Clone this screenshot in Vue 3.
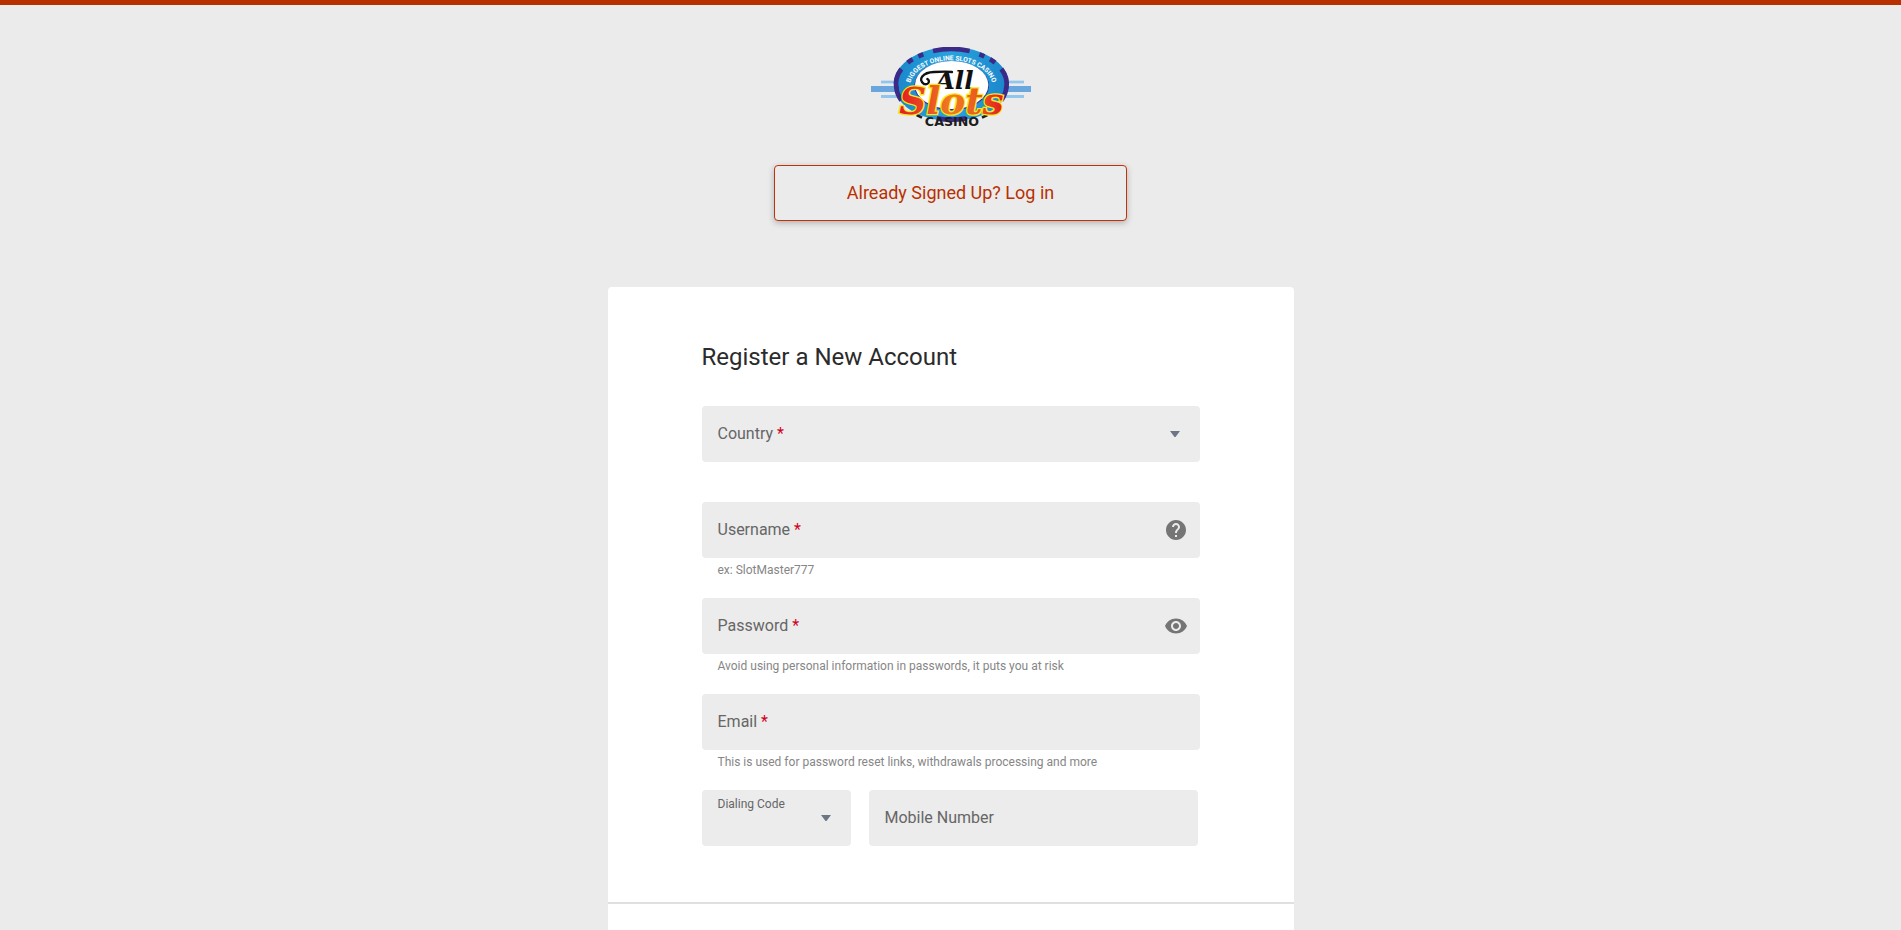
<script setup>
import { ref } from "vue"

const country = ref("")
const dialingCode = ref("")
const mobile = ref("")
const showPassword = ref(false)

const fields = ref([
  { id: "username", label: "Username", type: "text", value: "", hint: "ex: SlotMaster777" },
  { id: "password", label: "Password", type: "password", value: "", hint: "Avoid using personal information in passwords, it puts you at risk" },
  { id: "email", label: "Email", type: "email", value: "", hint: "This is used for password reset links, withdrawals processing and more" },
])

function inputType(field) {
  if (field.id === "password" && showPassword.value) return "text"
  return field.type
}
</script>

<template>
  <div class="page">
    <header class="header">
      <a href="#" class="logo" aria-label="All Slots Casino">
        <svg viewBox="33 36 480 240" width="160" height="80">
          <defs>
            <linearGradient id="ringFill" x1="0" y1="0" x2="1" y2="0">
              <stop offset="0" stop-color="#1b86cb" />
              <stop offset="0.5" stop-color="#27a3dd" />
              <stop offset="1" stop-color="#1b86cb" />
            </linearGradient>
            <linearGradient id="slotsFill" x1="0" y1="0" x2="1" y2="0">
              <stop offset="0" stop-color="#e31b23" />
              <stop offset="0.5" stop-color="#f07c22" />
              <stop offset="0.75" stop-color="#ea5a20" />
              <stop offset="1" stop-color="#e31b23" />
            </linearGradient>
            <path id="ringText" d="M150 156 A124 80 0 0 1 398 156" />
          </defs>
          <!-- stripes behind the chip -->
          <rect x="63" y="137" width="429" height="8" fill="#90c5ee" />
          <rect x="33" y="153" width="480" height="18" fill="#69a6dd" />
          <rect x="63" y="180" width="429" height="9" fill="#90c5ee" />
          <!-- chip -->
          <ellipse cx="274" cy="147" rx="172" ry="111" fill="url(#ringFill)" />
          <g fill="none" stroke="#3b2a88" stroke-width="14">
            <path d="M219 48 A166 105 0 0 1 329 48" />
            <path d="M109 160 A166 105 0 0 1 124 102" />
            <path d="M424 102 A166 105 0 0 1 439 160" />
            <path d="M143 83 A166 105 0 0 1 158 73" />
            <path d="M175 64 A166 105 0 0 1 190 58" />
            <path d="M358 58 A166 105 0 0 1 373 64" />
            <path d="M390 73 A166 105 0 0 1 405 83" />
            <path d="M109 155 A166 105 0 0 0 124 196" />
            <path d="M439 155 A166 105 0 0 1 424 196" />
            <path d="M230 250 A166 105 0 0 0 318 250" />
          </g>
          <ellipse cx="275" cy="152" rx="112" ry="74" fill="#3b2a88" />
          <ellipse cx="275" cy="150" rx="110" ry="72" fill="#fff" />
          <text class="ring-label"><textPath href="#ringText" startOffset="50%" text-anchor="middle">BIGGEST ONLINE SLOTS CASINO</textPath></text>
          <text class="all-label" x="284" y="162" text-anchor="middle">All</text>
          <path d="M192 147 C172 134 188 112 222 111 C242 110 262 109 276 111 M192 147 C205 151 212 138 202 132" fill="none" stroke="#111" stroke-width="7" stroke-linecap="round" />
          <path d="M170 240 L186 248 M382 240 L366 248" stroke="#1d1d1b" stroke-width="8" />
          <text class="slots-label" x="274" y="238" text-anchor="middle">Slots</text>
          <text class="casino-label" x="276" y="274" text-anchor="middle">CASINO</text>
        </svg>
      </a>
      <button type="button" class="login">Already Signed Up? Log in</button>
    </header>

    <main class="card">
      <form class="form" @submit.prevent>
        <h1>Register a New Account</h1>

        <div class="row">
          <div class="field">
            <select id="country" v-model="country" required>
              <option value=""></option>
              <option value="Canada">Canada</option>
              <option value="Ireland">Ireland</option>
              <option value="New Zealand">New Zealand</option>
            </select>
            <label for="country" :class="{ small: country }">Country <span class="star">*</span></label>
            <svg class="arrow" viewBox="0 0 10 6" width="10" height="6"><path d="M0 0h10L5.500 6h-1z" /></svg>
          </div>
        </div>

        <div class="row" v-for="field in fields" :key="field.id">
          <div class="field">
            <input :id="field.id" :type="inputType(field)" v-model="field.value" required>
            <label :for="field.id" :class="{ small: field.value }">{{ field.label }} <span class="star">*</span></label>
            <button v-if="field.id === 'username'" type="button" class="icon" aria-label="Help">
              <svg viewBox="0 0 24 24" width="24" height="24"><path d="M12 2C6.480 2 2 6.480 2 12s4.480 10 10 10 10-4.480 10-10S17.520 2 12 2zm1 17h-2v-2h2v2zm2.070-7.750l-.9.920C13.450 12.900 13 13.500 13 15h-2v-.5c0-1.100.45-2.100 1.170-2.830l1.240-1.260c.37-.36.59-.86.59-1.410 0-1.100-.9-2-2-2s-2 .9-2 2H8c0-2.210 1.790-4 4-4s4 1.790 4 4c0 .88-.36 1.680-.93 2.250z" /></svg>
            </button>
            <button v-if="field.id === 'password'" type="button" class="icon" aria-label="Show password" @click="showPassword = !showPassword">
              <svg viewBox="0 0 24 24" width="24" height="24"><path d="M12 4.500C7 4.500 2.730 7.610 1 12c1.730 4.390 6 7.500 11 7.500s9.270-3.110 11-7.500c-1.730-4.390-6-7.500-11-7.500zM12 17c-2.760 0-5-2.240-5-5s2.240-5 5-5 5 2.240 5 5-2.240 5-5 5zm0-8c-1.660 0-3 1.340-3 3s1.340 3 3 3 3-1.340 3-3-1.340-3-3-3z" /></svg>
            </button>
          </div>
          <p class="hint">{{ field.hint }}</p>
        </div>

        <div class="phone">
          <div class="field">
            <select id="dialing" v-model="dialingCode">
              <option value=""></option>
              <option value="+1">+1</option>
              <option value="+64">+64</option>
              <option value="+353">+353</option>
            </select>
            <label for="dialing" class="small">Dialing Code</label>
            <svg class="arrow" viewBox="0 0 10 6" width="10" height="6"><path d="M0 0h10L5.500 6h-1z" /></svg>
          </div>
          <div class="field">
            <input id="mobile" type="tel" v-model="mobile">
            <label for="mobile" :class="{ small: mobile }">Mobile Number</label>
          </div>
        </div>
      </form>
    </main>
  </div>
</template>

<style>
body {
  margin: 0;
  background: #ebebeb;
}
</style>

<style scoped>
.page {
  box-sizing: border-box;
  min-height: 100vh;
  display: flex;
  flex-direction: column;
  align-items: center;
  border-top: 5px solid #b93000;
  background: #ebebeb;
  font-family: Roboto, "Liberation Sans", sans-serif;
}

.header {
  display: flex;
  flex-direction: column;
  align-items: center;
  gap: 38px;
  width: 100%;
  padding: 42px 0 66px;
}

.logo,
.logo svg {
  display: block;
}

.ring-label {
  font: bold 20px Roboto, sans-serif;
  fill: #fff;
}

.all-label {
  font: italic bold 74px "DejaVu Serif", serif;
  fill: #111;
}

.slots-label {
  font: italic bold 112px "DejaVu Serif", serif;
  fill: url(#slotsFill);
  stroke: #f5e71c;
  stroke-width: 8px;
  paint-order: stroke;
}

.casino-label {
  font: bold 38px "DejaVu Sans", sans-serif;
  fill: #1d1d1b;
}

.login {
  width: 353px;
  max-width: 100%;
  height: 56px;
  padding: 0 0 2px;
  border: 1px solid #c0320a;
  border-radius: 4px;
  background: #ebebeb;
  box-shadow: 0 2px 6px rgba(0, 0, 0, 0.25);
  color: #b93000;
  font-family: inherit;
  font-size: 18px;
  cursor: pointer;
}

.card {
  box-sizing: border-box;
  flex: 1;
  width: 100%;
  max-width: 686px;
  border-radius: 4px 4px 0 0;
  background: #fff;
}

.form {
  padding: 54px 94px 56px;
  border-bottom: 2px solid #e0e0e0;
}

h1 {
  margin: 0 0 33px;
  color: #2b2b2b;
  font-size: 24px;
  font-weight: 400;
  line-height: 32px;
}

.row {
  height: 96px;
}

.field {
  display: grid;
  align-items: center;
  height: 56px;
  border-radius: 4px;
  background: #ececec;
}

.field > * {
  grid-area: 1 / 1;
}

.field input,
.field select {
  box-sizing: border-box;
  width: 100%;
  height: 56px;
  padding: 20px 16px 6px;
  border: 0;
  border-radius: 4px;
  background: transparent;
  color: #2b2b2b;
  font-family: inherit;
  font-size: 16px;
  appearance: none;
}

.field label {
  padding: 0 16px;
  color: #666;
  font-size: 16px;
  line-height: 20px;
  pointer-events: none;
}

.field label.small {
  align-self: start;
  padding-top: 4px;
  font-size: 12px;
}

.star {
  color: #d0021b;
}

.arrow {
  justify-self: end;
  margin-right: 20px;
  fill: #6b7784;
  pointer-events: none;
}

.icon {
  justify-self: end;
  margin-right: 12px;
  padding: 0;
  border: 0;
  background: none;
  cursor: pointer;
}

.icon svg {
  display: block;
  fill: #757575;
}

.hint {
  margin: 0;
  padding: 4px 16px 0;
  color: #868686;
  font-size: 12px;
  line-height: 16px;
}

.phone {
  display: grid;
  grid-template-columns: 149px 1fr;
  gap: 18px;
  padding-right: 2px;
}

@media (max-width: 700px) {
  .form {
    padding-left: 24px;
    padding-right: 24px;
  }
}
</style>
